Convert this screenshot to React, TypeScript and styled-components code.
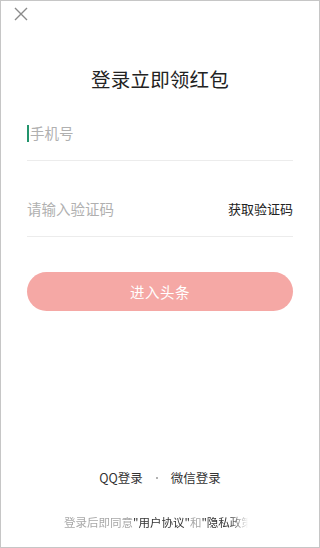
import styled, { createGlobalStyle } from "styled-components";

const GlobalStyle = createGlobalStyle`
  html, body {
    margin: 0;
    padding: 0;
    background: #fff;
  }
  body {
    font-family: "Noto Sans CJK SC", "Noto Sans", sans-serif;
  }
`;

const Page = styled.div`
  width: 320px;
  height: 548px;
  box-sizing: border-box;
  border: 1px solid #c6c6c6;
  background: #fff;
  display: flex;
  flex-direction: column;
  padding: 0 26px 17px;
  overflow: hidden;
`;

const TopBar = styled.div`
  height: 26px;
  display: flex;
  align-items: center;
  margin-left: -13px;
`;

const CloseButton = styled.button`
  width: 14px;
  height: 14px;
  padding: 0;
  border: none;
  background: none;
  display: flex;
  cursor: pointer;
`;

const Title = styled.h1`
  margin: 38px 0 0;
  font-size: 19.5px;
  line-height: 28px;
  font-weight: 400;
  color: #222;
  text-align: center;
  letter-spacing: 0.2px;
`;

const Field = styled.div<{ $gap: number }>`
  height: 54px;
  margin-top: ${(p) => p.$gap}px;
  display: flex;
  align-items: center;
  justify-content: space-between;
  border-bottom: 1px solid #ececec;
`;

const InputWrap = styled.div`
  display: flex;
  align-items: center;
`;

const Caret = styled.span`
  width: 2px;
  height: 17px;
  background: #23946c;
  margin-right: 1px;
`;

const Placeholder = styled.span`
  font-size: 14.5px;
  line-height: 20px;
  color: #b0b0b0;
`;

const CodeLink = styled.span`
  font-size: 13px;
  line-height: 18px;
  color: #222;
`;

const SubmitButton = styled.button`
  margin-top: 35px;
  height: 39px;
  border: none;
  border-radius: 20px;
  background: #f5a8a5;
  color: #fff;
  font-family: inherit;
  font-size: 14.5px;
  letter-spacing: 0.5px;
`;

const Bottom = styled.div`
  margin-top: auto;
  display: flex;
  flex-direction: column;
  align-items: center;
`;

const SocialRow = styled.div`
  display: flex;
  align-items: center;
  gap: 13px;
  font-size: 12.5px;
  line-height: 20px;
  color: #333;
`;

const Dot = styled.span`
  width: 2px;
  height: 2px;
  border-radius: 1px;
  background: #999;
`;

const Agreement = styled.div`
  margin-top: 26px;
  width: 184px;
  margin-right: 8px;
  white-space: nowrap;
  overflow: hidden;
  font-size: 11.5px;
  line-height: 16px;
  color: #a8a8a8;
  -webkit-mask-image: linear-gradient(to right, #000 90%, transparent);
`;

const Strong = styled.span`
  color: #333;
`;

const App = () => {
  return (
    <Page>
      <GlobalStyle />
      <TopBar>
        <CloseButton aria-label="关闭">
          <svg width="14" height="14" viewBox="0 0 14 14">
            <path d="M1 1L13 13M13 1L1 13" stroke="#8a8a8a" strokeWidth="1.4" fill="none" />
          </svg>
        </CloseButton>
      </TopBar>
      <Title>登录立即领红包</Title>
      <Field $gap={13}>
        <InputWrap>
          <Caret />
          <Placeholder>手机号</Placeholder>
        </InputWrap>
      </Field>
      <Field $gap={21}>
        <Placeholder>请输入验证码</Placeholder>
        <CodeLink>获取验证码</CodeLink>
      </Field>
      <SubmitButton>进入头条</SubmitButton>
      <Bottom>
        <SocialRow>
          <span>QQ登录</span>
          <Dot />
          <span>微信登录</span>
        </SocialRow>
        <Agreement>
          登录后即同意<Strong>"用户协议"</Strong>和<Strong>"隐私政策"</Strong>
        </Agreement>
      </Bottom>
    </Page>
  );
};

export default App;
